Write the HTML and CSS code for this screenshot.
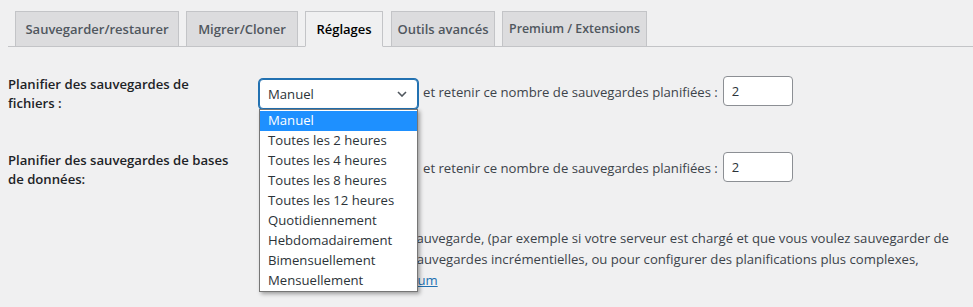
FILE: index.html
```html
<!DOCTYPE html>
<html lang="fr">
<head>
<meta charset="utf-8">
<title>Réglages</title>
<link rel="stylesheet" href="styles.css">
</head>
<body>
<div class="wrap">
  <nav class="tabs">
    <a class="tab t1">Sauvegarder/restaurer</a>
    <a class="tab t2">Migrer/Cloner</a>
    <a class="tab t3 active">Réglages</a>
    <a class="tab t4">Outils avancés</a>
    <a class="tab t5">Premium / Extensions</a>
  </nav>

  <div class="form">
    <div class="row">
      <div class="th">Planifier des sauvegardes de<br>fichiers :</div>
      <div class="td">
        <div class="select-wrap">
          <div class="select focus">
            <span>Manuel</span>
            <svg class="chev" width="10" height="6" viewBox="0 0 10 6"><path d="M1 1 L5 5 L9 1" fill="none" stroke="#50575e" stroke-width="1.6"/></svg>
          </div>
          <ul class="dropdown">
            <li class="sel">Manuel</li>
            <li>Toutes les 2 heures</li>
            <li>Toutes les 4 heures</li>
            <li>Toutes les 8 heures</li>
            <li>Toutes les 12 heures</li>
            <li>Quotidiennement</li>
            <li>Hebdomadairement</li>
            <li>Bimensuellement</li>
            <li>Mensuellement</li>
          </ul>
        </div>
        <span class="retain">et retenir ce nombre de sauvegardes planifiées :</span>
        <input class="num" type="text" value="2">
      </div>
    </div>

    <div class="row">
      <div class="th">Planifier des sauvegardes de bases<br>de données:</div>
      <div class="td">
        <div class="select-wrap">
          <div class="select">
            <span>Manuel</span>
            <svg class="chev" width="10" height="6" viewBox="0 0 10 6"><path d="M1 1 L5 5 L9 1" fill="none" stroke="#50575e" stroke-width="1.6"/></svg>
          </div>
        </div>
        <span class="retain">et retenir ce nombre de sauvegardes planifiées :</span>
        <input class="num" type="text" value="2">
      </div>
    </div>

    <div class="row last">
      <div class="th"></div>
      <div class="td">
        <p class="note"><span class="lead">Pour fixer l'heure d'une </span>sauvegarde, (par exemple si votre serveur est chargé et que vous voulez sauvegarder de<br>nuit), pour effectuer des sauvegardes incrémentielles, ou pour configurer des planifications plus complexes,<br><a href="#">utilisez UpdraftPlus Premium</a></p>
      </div>
    </div>
  </div>
</div>
</body>
</html>
```
FILE: styles.css
```css
html, body {
  margin: 0;
  padding: 0;
  background: #f0f0f1;
}
body {
  font-family: "Open Sans", "Noto Sans", sans-serif;
  font-size: 13.15px;
  color: #3c434a;
  width: 973px;
  height: 307px;
  overflow: hidden;
}
.wrap {
  padding-top: 11px;
  margin-left: 8px;
}
.tabs {
  display: flex;
  border-bottom: 1px solid #c3c4c7;
  padding-left: 7px;
  gap: 7px;
}
.tab {
  display: block;
  box-sizing: border-box;
  padding: 5px 0;
  text-align: center;
  white-space: nowrap;
  line-height: 24px;
  font-size: 13px;
  font-weight: 600;
  color: #50575e;
  background: #dcdcde;
  border: 1px solid #c3c4c7;
  border-bottom: none;
  text-decoration: none;
}
.t1 { width: 164px; }
.t2 { width: 112px; }
.t3 { width: 78px; }
.t4 { width: 104px; margin-left: 1px; }
.t5 { width: 145px; font-size: 12.4px; }
.tab.active {
  background: #f0f0f1;
  color: #000;
  border-bottom: 1px solid #f0f0f1;
  margin-bottom: -1px;
}
.form {
  padding-top: 19px;
}
.row {
  display: grid;
  grid-template-columns: 251px 1fr;
  height: 76px;
}
.row.last {
  height: auto;
}
.th {
  padding-top: 9px;
  font-weight: 600;
  color: #1d2327;
  line-height: 19px;
}
.td {
  padding-top: 10px;
  display: flex;
  align-items: flex-start;
  gap: 5px;
}
.select-wrap {
  position: relative;
  margin-top: 3px;
}
.select {
  box-sizing: border-box;
  width: 159px;
  height: 30px;
  border: 1px solid #8c8f94;
  border-radius: 4px;
  background: #fff;
  color: #2c3338;
  display: flex;
  align-items: center;
  justify-content: space-between;
  padding: 0 7px 0 8px;
}
.select.focus {
  border-color: #2271b1;
  box-shadow: 0 0 0 1px #2271b1;
}
.chev {
  margin-right: 3px;
}
.dropdown {
  position: absolute;
  left: 0;
  top: 30px;
  width: 159px;
  box-sizing: border-box;
  margin: 0;
  padding: 1px 0 0;
  list-style: none;
  background: #fff;
  border: 1px solid #767676;
  box-shadow: 2px 2px 4px rgba(0, 0, 0, 0.35);
  z-index: 10;
}
.dropdown li {
  height: 20px;
  line-height: 19px;
  padding-left: 8px;
  color: #2c3338;
  white-space: nowrap;
}
.dropdown li.sel {
  background: #1e90ff;
  color: #fff;
}
.retain {
  line-height: 30px;
  margin-top: 1px;
  white-space: nowrap;
}
.num {
  box-sizing: border-box;
  width: 70px;
  height: 30px;
  margin: 0;
  padding: 0 8px;
  border: 1px solid #8c8f94;
  border-radius: 4px;
  background: #fff;
  font-family: inherit;
  font-size: 13px;
  color: #2c3338;
}
.note {
  margin: 0;
  line-height: 21px;
  white-space: nowrap;
}
.note .lead {
  letter-spacing: 0.16px;
}
.note a {
  color: #2271b1;
}
```
